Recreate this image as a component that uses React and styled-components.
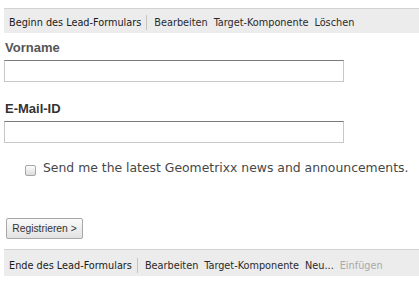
import React from "react"
import styled, { createGlobalStyle } from "styled-components"

const GlobalStyle = createGlobalStyle`
  html, body {
    margin: 0;
    padding: 0;
    background: #fff;
  }
`

const Page = styled.div`
  width: 419px;
  height: 281px;
  padding: 8px 0 0 4px;
  box-sizing: border-box;
  overflow: hidden;
  font-family: "Liberation Sans", Arial, sans-serif;
`

const Toolbar = styled.div`
  display: flex;
  align-items: center;
  height: ${props => props.$height}px;
  padding: ${props => props.$pad}px 0 0 5px;
  box-sizing: border-box;
  background: #ececec;
  border-top: 1px solid #d2d2d2;
  font-family: "DejaVu Sans Condensed", "Liberation Sans", sans-serif;
  font-size: 10.8px;
  white-space: nowrap;
`

const ToolTitle = styled.span`
  color: #1a1a1a;
`

const Divider = styled.span`
  width: 1px;
  height: 15px;
  background: #c4c4c4;
  margin: 0 7px 0 5px;
`

const ToolItem = styled.span`
  color: ${props => (props.$muted ? "#a9a9a9" : "#2a2a2a")};
  margin-right: 6px;
`

const Label = styled.div`
  font-size: 13px;
  line-height: 15px;
  font-weight: bold;
  color: ${props => props.$color};
  margin: ${props => props.$top}px 0 5px 1px;
`

const TextInput = styled.input`
  display: block;
  width: 340px;
  height: 22px;
  box-sizing: border-box;
  margin: 0;
  border: 1px solid #c8c8c8;
  border-top-color: #7a7a7a;
  background: #fff;
  outline: none;
`

const CheckRow = styled.label`
  display: flex;
  align-items: flex-start;
  margin: 17px 0 0 21px;
  font-family: "DejaVu Sans", sans-serif;
  font-size: 12.4px;
  line-height: 15px;
  color: #474747;
`

const Box = styled.span`
  width: 11px;
  height: 11px;
  box-sizing: border-box;
  margin: 5px 7px 0 0;
  border: 1px solid #a6a6a6;
  border-radius: 2px;
  background: linear-gradient(#fdfdfd, #dcdcdc);
`

const Button = styled.button`
  display: block;
  height: 21px;
  width: 77px;
  margin: 42px 0 0 2px;
  padding: 0;
  box-sizing: border-box;
  border: 1px solid #a8a8a8;
  border-radius: 2px;
  background: linear-gradient(#fafafa, #e2e2e2);
  font-family: "Liberation Sans", Arial, sans-serif;
  font-size: 10.3px;
  color: #333;
`

const BottomBar = styled(Toolbar)`
  margin-top: 10px;
`

const App = () => (
  <Page>
    <GlobalStyle />
    <Toolbar $height={25} $pad={3}>
      <ToolTitle>Beginn des Lead-Formulars</ToolTitle>
      <Divider />
      <ToolItem>Bearbeiten</ToolItem>
      <ToolItem>Target-Komponente</ToolItem>
      <ToolItem>Löschen</ToolItem>
    </Toolbar>

    <Label $top={7} $color="#555">Vorname</Label>
    <TextInput type="text" />

    <Label $top={19} $color="#333">E-Mail-ID</Label>
    <TextInput type="text" />

    <CheckRow>
      <Box />
      Send me the latest Geometrixx news and announcements.
    </CheckRow>

    <Button>Registrieren &gt;</Button>

    <BottomBar $height={27} $pad={4}>
      <ToolTitle>Ende des Lead-Formulars</ToolTitle>
      <Divider />
      <ToolItem>Bearbeiten</ToolItem>
      <ToolItem>Target-Komponente</ToolItem>
      <ToolItem>Neu...</ToolItem>
      <ToolItem $muted>Einfügen</ToolItem>
    </BottomBar>
  </Page>
)

export default App
